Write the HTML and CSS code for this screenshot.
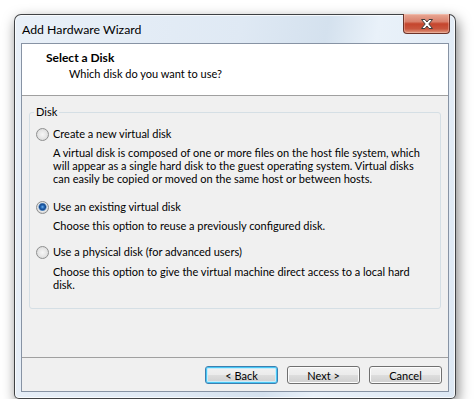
FILE: index.html
```html
<!DOCTYPE html>
<html lang="en">
<head>
    <meta charset="UTF-8">
    <title>Add Hardware Wizard</title>
    <link rel="stylesheet" href="styles.css">
</head>
<body>
    <div class="window">
        <div class="titlebar">
            <span class="title">Add Hardware Wizard</span>
            <div class="close-btn">
                <svg width="14" height="10" viewBox="0 0 14 10">
                    <path d="M1.5,0.5 H5 L7,3 L9,0.5 H12.5 L8.8,5 L12.5,9.5 H9 L7,7 L5,9.5 H1.5 L5.2,5 Z" fill="#ffffff" stroke="#3c3c3c" stroke-width="1" stroke-linejoin="round"/>
                </svg>
            </div>
        </div>
        <div class="client">
            <div class="header">
                <div class="heading">Select a Disk</div>
                <div class="subheading">Which disk do you want to use?</div>
            </div>
            <div class="content">
                <fieldset class="group">
                    <legend>Disk</legend>
                    <div class="option">
                        <span class="radio"></span>
                        <span>Create a new virtual disk</span>
                    </div>
                    <p class="desc desc-1">A virtual disk is composed of one or more files on the host file system, which<br>will appear as a single hard disk to the guest operating system. Virtual disks<br>can easily be copied or moved on the same host or between hosts.</p>

                    <div class="option option-2">
                        <span class="radio checked"></span>
                        <span>Use an existing virtual disk</span>
                    </div>
                    <p class="desc desc-2">Choose this option to reuse a previously configured disk.</p>

                    <div class="option option-3">
                        <span class="radio"></span>
                        <span>Use a physical disk (for advanced users)</span>
                    </div>
                    <p class="desc desc-3">Choose this option to give the virtual machine direct access to a local hard<br>disk.</p>
                </fieldset>
            </div>
            <div class="footer">
                <button type="button" class="btn btn-default">&lt; Back</button>
                <button type="button" class="btn">Next &gt;</button>
                <button type="button" class="btn">Cancel</button>
            </div>
        </div>
    </div>
</body>
</html>
```

FILE: styles.css
```css
body {
    margin: 0;
    padding: 14px 0 0 14px;
    background-color: #ffffff;
    font-family: Lato, "Open Sans", sans-serif;
    font-size: 11px;
    color: #000000;
}
.window {
    width: 442px;
    height: 385px;
    box-sizing: border-box;
    border: 1px solid rgba(0, 0, 0, 0.72);
    border-radius: 7px 7px 5px 5px;
    background: linear-gradient(100deg, #e9f0f8 0%, #dfe9f4 45%, #d4e1ee 62%, #e9f1f9 72%, #dde8f4 100%);
    box-shadow: inset 0 0 0 1px rgba(255, 255, 255, 0.75), 2px 5px 13px rgba(0, 0, 0, 0.5);
}
.titlebar {
    height: 28px;
    display: flex;
    align-items: center;
    padding: 0 5px 0 7px;
}
.title {
    font-size: 12.3px;
    color: #000000;
}
.close-btn {
    margin-left: auto;
    align-self: flex-start;
    margin-top: -1px;
    width: 47px;
    height: 20px;
    box-sizing: border-box;
    border: 1px solid #6b3329;
    border-top: none;
    border-radius: 0 0 4px 4px;
    background: linear-gradient(#e9a996 0%, #d9806b 40%, #c5452d 52%, #c9553d 78%, #e19b82 100%);
    box-shadow: inset 0 0 0 1px rgba(255, 220, 210, 0.35);
    display: flex;
    justify-content: center;
    align-items: center;
}
.client {
    margin: 0 6px 6px 6px;
    height: 349px;
    box-sizing: border-box;
    border: 1px solid #8793a4;
    background-color: #f0f0f0;
    display: flex;
    flex-direction: column;
}
.header {
    height: 52px;
    box-sizing: border-box;
    padding: 6px 0 0 24px;
    background-color: #ffffff;
    border-bottom: 1px solid #a0a0a0;
}
.heading {
    font-weight: bold;
    font-size: 12px;
    line-height: 16px;
}
.subheading {
    line-height: 16px;
    padding-left: 23px;
}
.content {
    flex: 1;
}
.group {
    margin: 9px 7px 0 7px;
    padding: 8px 6px 17px 6px;
    border: 1px solid #d5dfe5;
    border-radius: 3px;
}
.group legend {
    padding: 0 2px;
    margin-left: -2px;
    line-height: 14px;
}
.option {
    display: flex;
    align-items: center;
    gap: 4px;
    line-height: 14px;
}
.option-2 {
    margin-top: 15px;
}
.option-3 {
    margin-top: 13px;
}
.radio {
    width: 13px;
    height: 13px;
    box-sizing: border-box;
    border-radius: 50%;
    border: 1px solid #8e8f8f;
    background: radial-gradient(circle at 50% 50%, #f6f6f6 0%, #e8e8e8 45%, #d2d2d2 100%);
    flex-shrink: 0;
}
.radio.checked {
    background: radial-gradient(circle at 50% 45%, #7ab8ec 0, #2a6fbe 1.5px, #15478a 3px, #6f9ccc 3.8px, #eaeaea 4.5px, #d4d4d4 6px);
}
.desc {
    margin: 0;
    padding-left: 17px;
    line-height: 13px;
    white-space: nowrap;
}
.desc-1 {
    margin-top: 5px;
}
.desc-2 {
    margin-top: 5px;
}
.desc-3 {
    margin-top: 6px;
}
.footer {
    height: 34px;
    box-sizing: border-box;
    border-top: 1px solid #a0a0a0;
    padding: 8px 6px 7px 0;
    display: flex;
    justify-content: flex-end;
    gap: 9px;
}
.btn {
    width: 73px;
    height: 18px;
    padding: 0;
    font-family: Lato, "Open Sans", sans-serif;
    font-size: 11px;
    color: #000000;
    border: 1px solid #707070;
    border-radius: 3px;
    background: linear-gradient(#f2f2f2 0%, #ebebeb 48%, #dddddd 52%, #cfcfcf 100%);
    box-shadow: inset 0 0 0 1px #fcfcfc;
}
.btn-default {
    border-color: #3c7fb1;
    box-shadow: inset 0 0 0 1px #48c8f5, inset 0 0 0 2px #c8ecfb;
}
```
